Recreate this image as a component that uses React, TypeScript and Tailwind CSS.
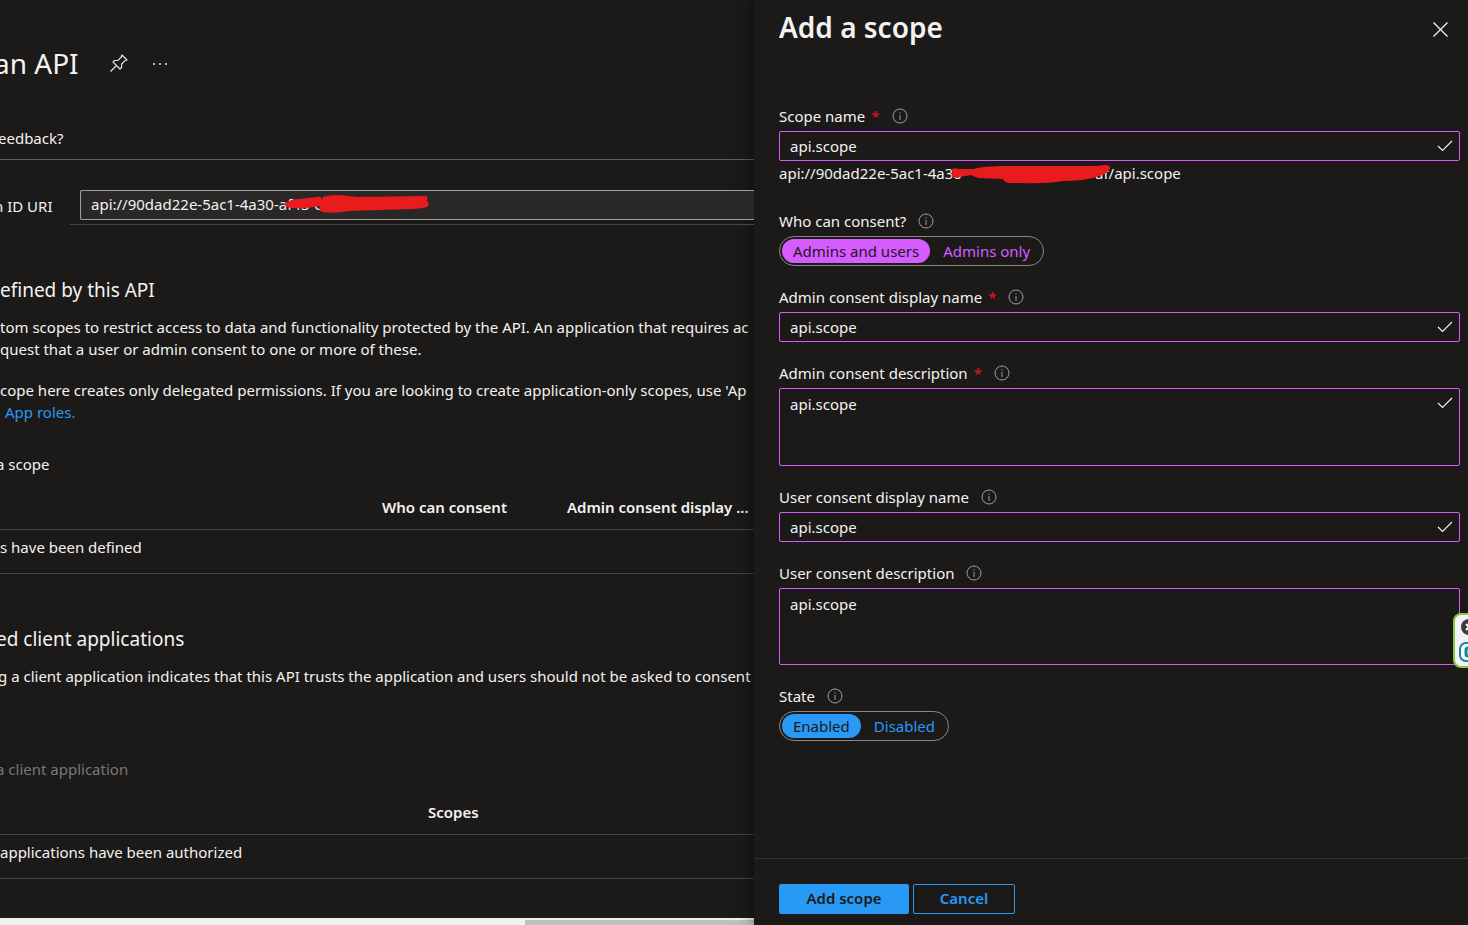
import { useId, useState, type ReactNode } from "react";

function InfoIcon() {
  return (
    <svg width="16" height="16" viewBox="0 0 16 16" fill="none" stroke="#a19f9d" role="img" aria-label="Info">
      <circle cx="8" cy="8" r="7" />
      <path d="M8 7v5M8 4.5v1.2" />
    </svg>
  );
}

function Check({ className }: { className: string }) {
  return (
    <svg className={className} width="16" height="14" viewBox="0 0 16 14" fill="none" stroke="#f3f2f1" strokeWidth="1.2" aria-hidden="true">
      <path d="M1 7l4.500 4.500L15 2" />
    </svg>
  );
}

function Label({ htmlFor, required, children }: { htmlFor?: string; required?: boolean; children: ReactNode }) {
  return (
    <div className="mb-1 flex h-[22px] items-center">
      <label htmlFor={htmlFor}>{children}</label>
      {required && <span className="ml-1.5 text-[#e81123]">*</span>}
      <span className="ml-3">
        <InfoIcon />
      </span>
    </div>
  );
}

function TextField({ label, required }: { label: string; required?: boolean }) {
  const id = useId();
  return (
    <div>
      <Label htmlFor={id} required={required}>{label}</Label>
      <div className="relative">
        <input id={id} defaultValue="api.scope" className="block h-[30px] w-full rounded-xs border border-[#d75cff] bg-transparent px-2.5 outline-none" />
        <Check className="absolute top-2 right-[7px]" />
      </div>
    </div>
  );
}

function AreaField({ label, required, checked, className }: { label: string; required?: boolean; checked?: boolean; className: string }) {
  const id = useId();
  return (
    <div>
      <Label htmlFor={id} required={required}>{label}</Label>
      <div className="relative">
        <textarea id={id} defaultValue="api.scope" className={`block w-full resize-none rounded-xs border border-[#d75cff] bg-transparent px-2.5 py-1 leading-[22px] outline-none ${className}`} />
        {checked && <Check className="absolute top-2 right-[7px]" />}
      </div>
    </div>
  );
}

function Toggle({ label, options, on, off }: { label: string; options: string[]; on: string; off: string }) {
  const [selected, setSelected] = useState(0);
  return (
    <div role="group" aria-label={label}>
      <Label>{label}</Label>
      <div className="flex h-[30px] w-fit items-center gap-0.5 rounded-full border border-[#8a8886] px-0.5">
        {options.map((o, i) => (
          <button key={o} type="button" aria-pressed={i === selected} onClick={() => setSelected(i)} className={`h-6 rounded-full px-[11px] leading-6 ${i === selected ? on : off}`}>
            {o}
          </button>
        ))}
      </div>
    </div>
  );
}

function LeftPane() {
  return (
    <main className="flex min-w-0 flex-1 flex-col overflow-hidden whitespace-nowrap">
      <header className="mt-10 flex h-[46px] items-center">
        <h1 className="-ml-1.5 text-[28px] leading-10">an API</h1>
        <button type="button" aria-label="Pin" className="ml-[30px]">
          <svg width="20" height="20" viewBox="0 0 20 20" fill="none" stroke="#e6e4e2" strokeWidth="1.2" strokeLinejoin="round">
            <path d="M13 2l5 5-2 .7-3.3 3.3-.2 3.5-1.5 1.5L4 9l1.500-1.500 3.500-.2L12.300 4zM7.500 12.500L1.500 18.500" />
          </svg>
        </button>
        <button type="button" aria-label="More" className="ml-[22px]">
          <svg width="18" height="6" viewBox="0 0 18 6" fill="#e6e4e2">
            <circle cx="3" cy="4" r="1" />
            <circle cx="9" cy="4" r="1" />
            <circle cx="15" cy="4" r="1" />
          </svg>
        </button>
      </header>
      <div className="mt-[31px] flex h-[43px] border-b border-[#605e5c] pt-2.5 leading-[22px]">
        <span className="-ml-0.5">eedback?</span>
      </div>
      <div className="mt-[30px] flex">
        <label htmlFor="app-uri" className="-ml-1.5 w-[76px] leading-8">n ID URI</label>
        <div className="relative flex-1 border-b border-[#484644] pb-1 pl-2.5">
          <input id="app-uri" readOnly value="api://90dad22e-5ac1-4a30-af43-c" className="block h-[30px] w-full rounded-l-xs border border-r-0 border-[#a19f9d] bg-[#292827] px-2.5 pb-0.5 outline-none" />
          <svg className="absolute top-1 left-[214px]" width="146" height="20" viewBox="0 0 146 20" fill="#e81c1c" aria-hidden="true">
            <path d="M0 10Q6 5 16 5L33 3Q38 1 37 6L39 3Q44 1 56 1Q65 2 73 3L142 2Q144 3 143 7Q146 10 143 13Q135 15 128 15L65 17Q50 20 38 18Q34 16 36 12Q20 15 8 14Q1 13 0 10Z" />
          </svg>
        </div>
      </div>
      <h2 className="mt-[51px] text-[19px] leading-7">efined by this API</h2>
      <div className="mt-3 leading-[22px]">
        <p>tom scopes to restrict access to data and functionality protected by the API. An application that requires ac</p>
        <p>quest that a user or admin consent to one or more of these.</p>
        <p className="mt-[19px]">cope here creates only delegated permissions. If you are looking to create application-only scopes, use 'Ap</p>
        <p className="pl-[5px]"><a href="#roles" className="text-[#2899f5]">App roles.</a></p>
      </div>
      <button type="button" className="-ml-1 mt-[30px] self-start leading-[22px]">a scope</button>
      <table className="mt-5 w-full table-fixed text-left">
        <thead>
          <tr className="h-[34px] border-b border-[#484644] align-top leading-6">
            <td className="w-[382px]" />
            <th className="w-[185px] font-semibold">Who can consent</th>
            <th className="font-semibold">Admin consent display ...</th>
          </tr>
        </thead>
        <tbody>
          <tr className="h-11 border-b border-[#484644] align-top leading-[22px]">
            <td colSpan={3} className="pt-1.5">s have been defined</td>
          </tr>
        </tbody>
      </table>
      <h2 className="-ml-1 mt-[51px] text-[19px] leading-7">ed client applications</h2>
      <p className="-ml-0.5 mt-3 leading-[22px]">g a client application indicates that this API trusts the application and users should not be asked to consent</p>
      <button type="button" disabled className="-ml-1 mt-[71px] self-start leading-[22px] text-[#797775]">a client application</button>
      <table className="mt-[21px] w-full table-fixed text-left">
        <thead>
          <tr className="h-[34px] border-b border-[#484644] align-top leading-[22px]">
            <td className="w-[428px]" />
            <th className="font-semibold">Scopes</th>
          </tr>
        </thead>
        <tbody>
          <tr className="h-11 border-b border-[#484644] align-top leading-[22px]">
            <td colSpan={2} className="pt-1.5">applications have been authorized</td>
          </tr>
        </tbody>
      </table>
      <div className="mt-auto flex h-[7px] justify-end bg-[#f1f1f1] pt-0.5">
        <div className="w-[229px] bg-[#c1c1c1]" />
      </div>
    </main>
  );
}

export default function App() {
  return (
    <div className="relative flex min-h-screen overflow-hidden bg-[#1b1a19] font-['Noto_Sans','Open_Sans',sans-serif] text-[15px] text-[#f3f2f1]">
      <LeftPane />
      <aside className="flex w-[714px] shrink-0 flex-col bg-[#1b1a19] shadow-[0_0_16px_rgba(0,0,0,0.6)]">
        <header className="flex items-start justify-between pt-2 pr-5 pl-[25px]">
          <h2 className="text-[28px] leading-[38px] font-semibold">Add a scope</h2>
          <button type="button" aria-label="Close" className="mt-3.5">
            <svg width="15" height="15" viewBox="0 0 15 15" stroke="#f3f2f1" strokeWidth="1.3">
              <path d="M.5.5l14 14M14.500.5l-14 14" />
            </svg>
          </button>
        </header>
        <form className="mt-[59px] flex flex-col gap-5 pr-2 pl-[25px]">
          <div>
            <TextField label="Scope name" required />
            <div className="relative mt-px flex h-7 leading-[22px]">
              <span className="w-[316px]">api://90dad22e-5ac1-4a30</span>
              <span>af/api.scope</span>
              <svg className="absolute top-[3px] left-[172px]" width="162" height="20" viewBox="0 0 162 20" fill="#e81c1c" aria-hidden="true">
                <path d="M0 5Q2 2 8 4L22 4L32 2L50 1H145L154 0Q160 0 159 4Q155 10 142 13Q130 16 112 16Q95 19 70 18H58Q53 17 52 14L28 13Q24 12 20 10L2 13Q-1 11 2 8Z" />
              </svg>
            </div>
          </div>
          <Toggle label="Who can consent?" options={["Admins and users", "Admins only"]} on="bg-[#d75cff] text-[#1b1a19]" off="text-[#d75cff]" />
          <TextField label="Admin consent display name" required />
          <AreaField label="Admin consent description" required checked className="h-[78px]" />
          <TextField label="User consent display name" />
          <AreaField label="User consent description" className="h-[77px]" />
          <Toggle label="State" options={["Enabled", "Disabled"]} on="bg-[#2899f5] text-[#1b1a19]" off="text-[#2899f5]" />
        </form>
        <footer className="mt-auto flex gap-1 border-t border-[#323130] pt-[25px] pb-[11px] pl-[25px] font-semibold">
          <button type="button" className="h-[30px] w-[130px] rounded-xs bg-[#2899f5] pb-0.5 text-[#1b1a19]">Add scope</button>
          <button type="button" className="h-[30px] w-[102px] rounded-xs border border-[#2899f5] pb-0.5 text-[#2899f5]">Cancel</button>
        </footer>
      </aside>
      <div className="absolute top-[613px] -right-8 h-[55px] w-[47px] rounded-lg border-2 border-[#8cc63f] bg-[#f3f3f3]">
        <svg width="20" height="50" viewBox="0 0 20 50" fill="none" aria-hidden="true">
          <circle cx="14" cy="12" r="8" fill="#3a3a3f" />
          <path d="M11 9l6 6M17 9l-6 6" stroke="#fff" strokeWidth="2" />
          <rect x="5" y="28" width="20" height="18" rx="6" stroke="#0b8a9c" strokeWidth="2" fill="#fff" />
          <path d="M18 33h-5q-2 0-2 2v4q0 2 2 2h5" stroke="#0b8a9c" strokeWidth="3" />
        </svg>
      </div>
    </div>
  );
}
